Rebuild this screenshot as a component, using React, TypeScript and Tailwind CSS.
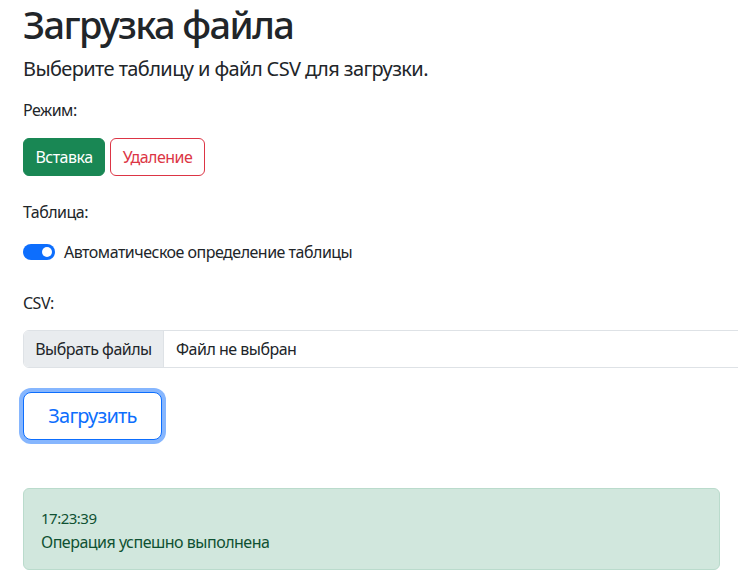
import React, { useState } from 'react';

const App: React.FC = () => {
    const [mode, setMode] = useState<'insert' | 'delete'>('insert');
    const [auto, setAuto] = useState(true);

    return (
        <div className="w-[738px] h-[581px] overflow-hidden bg-white text-[#212529] font-['Noto_Sans',sans-serif] tracking-[-0.5px]">
            <div className="pl-[23px]">
                <h1 className="text-[38px] leading-[48px] font-medium tracking-[-1.6px]">Загрузка файла</h1>
                <p className="mt-[6px] text-[20px] leading-[30px] tracking-[-0.6px]">Выберите таблицу и файл CSV для загрузки.</p>

                <div className="mt-[14px] text-base leading-6">Режим:</div>
                <div className="mt-4 flex gap-[5px]">
                    <button
                        onClick={() => setMode('insert')}
                        className={`h-[38px] w-[82px] rounded-[6px] border text-base leading-6 ${mode === 'insert' ? 'bg-[#198754] border-[#198754] text-white' : 'bg-white border-[#198754] text-[#198754]'}`}
                    >
                        Вставка
                    </button>
                    <button
                        onClick={() => setMode('delete')}
                        className={`h-[38px] w-[95px] rounded-[6px] border text-base leading-6 ${mode === 'delete' ? 'bg-[#dc3545] border-[#dc3545] text-white' : 'bg-white border-[#dc3545] text-[#dc3545]'}`}
                    >
                        Удаление
                    </button>
                </div>

                <div className="mt-6 text-base leading-6">Таблица:</div>
                <label className="mt-4 flex items-center gap-[9px] text-base leading-6 cursor-pointer">
                    <span
                        onClick={() => setAuto(!auto)}
                        className={`w-8 h-4 rounded-full flex items-center px-[3px] ${auto ? 'bg-[#0d6efd] justify-end' : 'bg-white border border-[#dee2e6] justify-start'}`}
                    >
                        <span className="w-[10px] h-[10px] rounded-full bg-white" />
                    </span>
                    Автоматическое определение таблицы
                </label>

                <div className="mt-[27px] text-base leading-6">CSV:</div>
                <div className="mt-[15px] flex w-[760px] h-[38px] border border-[#dee2e6] rounded-[6px] overflow-hidden text-base leading-6">
                    <span className="flex items-center justify-center w-[140px] bg-[#e9ecef] border-r border-[#dee2e6]">Выбрать файлы</span>
                    <span className="flex items-center px-3">Файл не выбран</span>
                </div>

                <button className="mt-6 h-12 w-[139px] rounded-[8px] border border-[#0d6efd] bg-white text-[#0d6efd] text-[20px] leading-[30px] tracking-[-0.8px] shadow-[0_0_0_4px_#86b6fe]">
                    Загрузить
                </button>

                <div className="mt-12 w-[697px] rounded-[6px] border border-[#badbcc] bg-[#d1e7dd] text-[#0f5132] pt-[17px] pb-[15px] px-[17px] text-base leading-6">
                    <div className="text-[15px]">17:23:39</div>
                    <div>Операция успешно выполнена</div>
                </div>
            </div>
        </div>
    );
};

export default App;
